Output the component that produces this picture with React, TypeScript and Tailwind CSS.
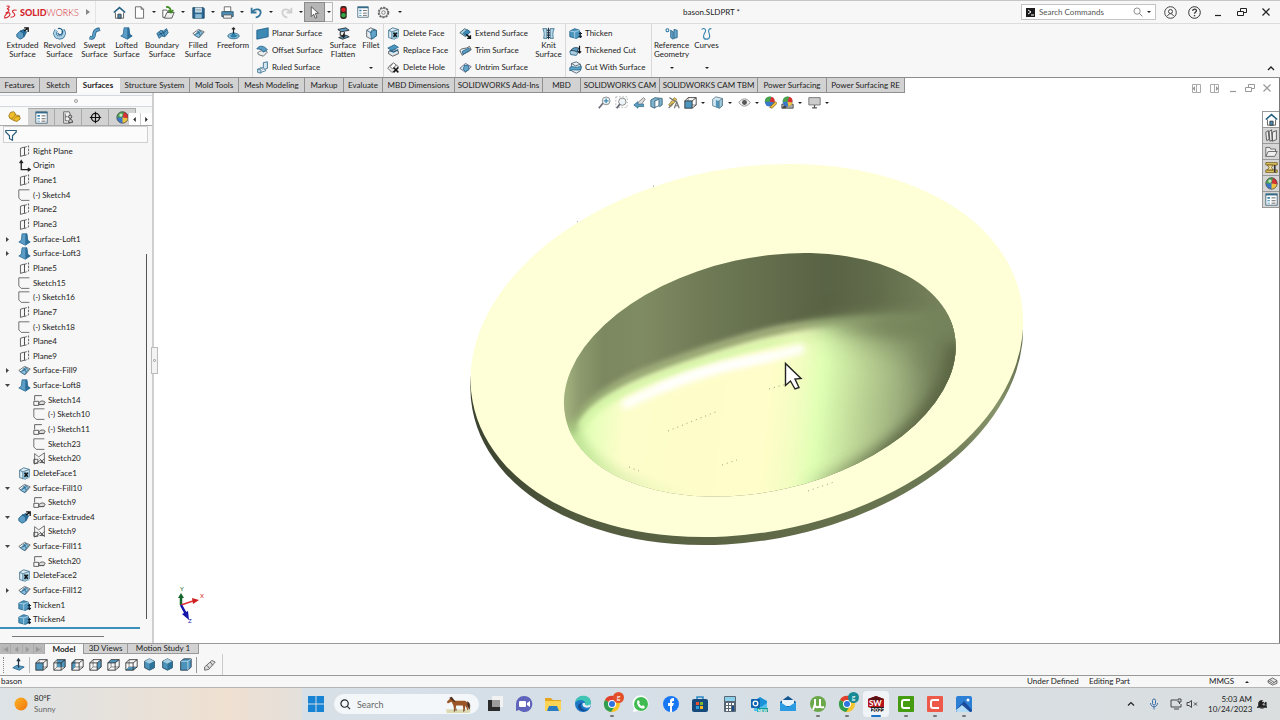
import { ReactNode } from "react";
import clsx from "clsx";

const B = "#5b9dc4";
const D = "#1f5f88";
const L = "#b9d9ea";
const K = "#333";

// every drawing sits on a 16x16 grid
const icons: Record<string, ReactNode> = {
  extrude: (
    <>
      <path d="M1 9l4-4 5 2-1 6-4 2-4-3z" fill={B} stroke={D} />
      <path d="M5 5l5-2 3 3-3 6-1-5z" fill="#2d6f99" stroke={D} />
      <path d="M10 5l4-3M10 1h5v5" stroke="#111" strokeWidth="1.6" fill="none" />
    </>
  ),
  revolve: (
    <>
      <path d="M4 4C1 8 3 13 8 13s7-6 4-9" fill="none" stroke={D} strokeWidth="4.500" />
      <path d="M4 4C1 8 3 13 8 13s7-6 4-9" fill="none" stroke="#a9d0e4" strokeWidth="3" />
      <path d="M6 2c5-1 7 3 5 6s-5 1-5-1" fill="none" stroke={D} strokeWidth="1.500" />
    </>
  ),
  swept: (
    <>
      <path d="M2 13c6 2 5-3 6-6s2-4 6-4" fill="none" stroke={D} strokeWidth="4.5" />
      <path d="M2 13c6 2 5-3 6-6s2-4 6-4" fill="none" stroke={B} strokeWidth="2.8" />
      <path d="M13 1l2 4" stroke={D} />
    </>
  ),
  loft: (
    <>
      <path d="M5 1h6l1 8 3 2-6 4-8-4 3-2z" fill={B} stroke="#2d6f99" />
      <path d="M9 1h2l1 8 3 2-6 4z" fill="#2d6f99" />
    </>
  ),
  boundary: (
    <>
      <path d="M1 8l5-4 3 1 4-3 2 5-4 5-4-1-3 3z" fill={B} stroke={D} />
      <path d="M4 6l4 5M8 5l3 6M3 10c4-3 7-2 10-6" stroke="#174d70" fill="none" />
    </>
  ),
  fill: (
    <>
      <path d="M1 8l7-5 7 3-6 7z" fill="#fff" stroke="#555" />
      <path d="M3 10l6-6 4 3-5 6z" fill="#8fc1dc" stroke={D} />
      <path d="M5 9l5-3M7 5l3 5" stroke={D} />
    </>
  ),
  freeform: (
    <>
      <ellipse cx="8" cy="11" rx="7" ry="3.5" fill="#8fc1dc" stroke={D} />
      <path d="M4 10c3 0 2-4 4-4s1 4 4 4-2 3-4 3-4-1-4-3z" fill="#2d7ea8" />
      <path d="M8 8V1M6 3l2-2 2 2" stroke="#222" fill="none" strokeWidth="1.4" />
    </>
  ),
  planar: <path d="M1 4l14-3v11L1 15z" fill="#3d8ab5" stroke={D} />,
  offset: (
    <>
      <path d="M2 11c2-3 9-4 12-1l-5 5-6-2z" fill="#e9eef0" stroke="#555" />
      <path d="M1 6c3-5 9-4 13 1l-5 3C8 7 5 6 1 6z" fill={B} stroke={D} />
    </>
  ),
  ruled: (
    <>
      <path d="M9 2l5-1v8l-5 2z" fill="#d7e7ef" stroke={D} />
      <path d="M2 10l4 4 6-2-3-4z" fill="#f0f4f6" stroke="#3b7090" />
      <path d="M2 10v4l4 1v-4zM5 7l4 4" fill="#c3dcea" stroke="#3b7090" />
    </>
  ),
  flatten: (
    <>
      <path d="M1 3l10-2 4 3-10 2z" fill={B} stroke="#222" />
      <path d="M2 13l9-3 4 2-8 3z" fill={B} stroke="#222" />
      <path d="M4 6v4l5 1V6M8 8v5M6 11l2 2 2-2" fill="none" stroke="#222" strokeWidth="1.3" />
    </>
  ),
  fillet: (
    <>
      <path d="M2 4l5-3 7 3v7l-6 4-6-3z" fill="#e4edf2" stroke="#555" />
      <path d="M7 8c0-3 3-4 7-4v7l-6 4z" fill="#62a5ca" stroke={D} />
      <path d="M2 4l5 3c0-3 3-4 5-4" fill="none" stroke={D} />
    </>
  ),
  deleteFace: (
    <>
      <path d="M2 4l5-3 7 2v9l-5 3-7-2z" fill="#dcebf2" stroke="#356b8a" />
      <path d="M2 4l4 2 8-3M6 6v9" fill="none" stroke="#356b8a" />
      <path d="M6 6h8v8H6z" fill="#8fbdd4" />
      <path d="M8 7l4 5M12 7l-4 5" stroke="#111" strokeWidth="1.8" />
    </>
  ),
  replaceFace: (
    <>
      <path d="M2 9l8-2 4 2v3l-7 3-5-3z" fill="#dbe8ee" stroke="#444" />
      <path d="M1 5l8-4 5 3-8 4z" fill="#4b98c2" stroke={D} />
      <path d="M3 8l5 2 6-3" stroke={D} fill="none" strokeWidth="1.6" />
    </>
  ),
  deleteHole: (
    <>
      <path d="M1 9c2-3 4-6 8-6l5 4-3 4-5 3z" fill="#e6e6e6" stroke="#555" />
      <path d="M4 7l4-5 3 3-4 5z" fill="#fff" stroke="#666" />
      <path d="M8 8l6 6M14 8l-6 6" stroke="#111" strokeWidth="1.8" />
    </>
  ),
  extend: (
    <>
      <path d="M1 7l6-5 6 4-5 6z" fill="#a8cde0" stroke="#355" />
      <path d="M5 8l5-5 4 3-5 5z" fill="#3d8ab5" stroke={D} />
      <path d="M9 9l5 5M14 10v4h-4" stroke="#111" strokeWidth="1.8" fill="none" />
    </>
  ),
  trim: (
    <>
      <path d="M1 8c3-4 7-1 12-5l2 4c-4 4-7 3-11 7z" fill="#eef3f5" stroke="#444" />
      <path d="M4 9l8-4 2 2-9 6z" fill="#5b9dc4" stroke={D} />
    </>
  ),
  untrim: (
    <>
      <path d="M1 9l7-6 7 4-7 7z" fill="#e3eef3" stroke="#557" />
      <path d="M7 5l5 1v5l-4 2-3-3z" fill="#63a4c7" stroke={D} />
    </>
  ),
  knit: (
    <>
      <path d="M1 2h5v12H2c1-4 1-8-1-12zM15 2h-5v12h4c-1-4-1-8 1-12z" fill={L} stroke="#356b8a" />
      <path d="M8 1v14" stroke="#234" strokeWidth="1.300" />
      <path d="M6 4h4M6 7h4M6 10h4M6 13h4" stroke="#234" strokeWidth="1.300" />
    </>
  ),
  thicken: (
    <>
      <path d="M1 5l6-3 6 2v8l-4 2-8-2z" fill="#4f97be" stroke={D} />
      <path d="M1 5l6 1 6-2M7 6v8" stroke={L} fill="none" />
      <path d="M12 8h4M14 6v7M12 11l2 2 2-2" stroke="#123" strokeWidth="1.3" fill="none" />
    </>
  ),
  thickCut: (
    <>
      <path d="M1 9l6-3 5 3-3 5-7-1z" fill="#a9cedf" stroke={D} />
      <path d="M2 8c3-4 6-4 10-3l-2 5c-3-2-6-2-8-2z" fill="#5b9dc4" stroke="#234" />
      <path d="M13 2v9M11 9l2 2 2-2" stroke="#111" strokeWidth="1.4" fill="none" />
    </>
  ),
  cutWith: (
    <>
      <path d="M3 3l6-2 5 3v8l-5 3-6-3z" fill="#e8f0f3" stroke="#456" />
      <path d="M1 8c3-3 8 2 14-2v4c-5 3-9-1-14 2z" fill="#5ba5c9" stroke={D} />
      <path d="M3 3l5 3 6-2" stroke="#456" fill="none" />
    </>
  ),
  refGeo: (
    <>
      <circle cx="3" cy="4" r="1.8" fill="none" stroke="#2c77a3" strokeWidth="1.3" />
      <path d="M7 4l3 2v9l-3-2zM11 3l4 1v9l-4 1z" fill="#6aa9cb" stroke={D} />
    </>
  ),
  curves: <path d="M2 3c4-3 6 1 4 4s-3 8 2 8 4-5 3-8 0-5 3-5" fill="none" stroke="#3a87b2" strokeWidth="1.4" />,
  plane: (
    <>
      <path d="M3 4l5-1.500v10L3 14z" fill="none" stroke="#444" />
      <path d="M8 3l5-2v10l-5 2z" fill="none" stroke="#444" strokeDasharray="3 1.500" />
    </>
  ),
  origin: <path d="M4 3v10h10M2 5l2-3 2 3M12 11l3 2-3 2" fill="none" stroke="#222" strokeWidth="1.6" />,
  sketch: <path d="M14 1H1v10l3 3h10" fill="none" stroke="#555" />,
  sketchShared: (
    <>
      <path d="M11 2H2v6M1 9v5h6V9zM7 13h7" fill="none" stroke="#444" />
      <path d="M7 11c2-3 6-3 8-1l-2 3H8z" fill="#ddd" stroke="#444" />
    </>
  ),
  sketch3d: (
    <>
      <path d="M2 2l5 4 7-5v13l-5-4-7 5z" fill="none" stroke="#555" />
      <path d="M1 9h5v5H1zM8 8l6 6M14 8l-5 5M8 13h6" fill="none" stroke="#444" />
    </>
  ),
  home: (
    <>
      <path d="M3 8v7h10V8" fill="#fff" stroke="#444" />
      <path d="M1 8l7-6 7 6" fill="none" stroke="#245f80" strokeWidth="2" />
      <path d="M6 10h4v5H6z" fill="#4b8db5" stroke={K} />
    </>
  ),
  newDoc: <path d="M3 1h7l3 3v11H3zM10 1v3h3" fill="#fff" stroke="#555" />,
  open: (
    <>
      <path d="M1 5h5l1 2h5v7H1z" fill="#fff" stroke="#444" />
      <path d="M3 15l3-7h9l-3 7z" fill="#eee" stroke="#444" />
      <path d="M5 1c4 0 6 2 6 6M8 5l3 3 3-3" fill="none" stroke="#3f8b22" strokeWidth="2" />
    </>
  ),
  save: (
    <>
      <path d="M1 2h13l1 1v12H1z" fill="#2a6790" stroke="#15415f" />
      <path d="M4 2h8v6H4z" fill="#e8f1f5" />
      <path d="M4 10h8v5H4z" fill="#8bbad2" />
      <path d="M5 4h6M5 6h6" stroke="#7799aa" />
    </>
  ),
  print: (
    <>
      <path d="M4 1h8v6H4z" fill="#fff" stroke="#555" />
      <path d="M1 7h14v6H1z" fill="#4e8fb5" stroke="#234d68" />
      <path d="M3 11h10v4H3z" fill="#eee" stroke="#555" />
    </>
  ),
  undo: <path d="M2 2v6h6M3 7c4-5 11-3 10 2-1 3-3 5-6 5" fill="none" stroke="#35769c" strokeWidth="2.2" />,
  redo: <path d="M14 2v6H8M13 7C9 2 2 4 3 9c1 3 3 5 6 5" fill="none" stroke="#cfcfcf" strokeWidth="2.2" />,
  cursor: <path d="M4 1v12l3-3 2 5 2-1-2-5h4z" fill="#fff" stroke="#444" />,
  traffic: (
    <>
      <rect x="4" y="0" width="8" height="16" rx="3" fill="#30261f" />
      <circle cx="8" cy="4.500" r="2.800" fill="#e21f26" />
      <circle cx="8" cy="11.500" r="2.800" fill="#32a546" />
    </>
  ),
  list: (
    <>
      <path d="M1 1h14v14H1z" fill="#fff" stroke="#335a70" />
      <path d="M1 1h14v2H1z" fill="#356b8a" />
      <path d="M3 5h3v2H3zM3 9h3v1H3zM3 12h3v1H3z" fill="#3180ac" />
      <path d="M8 6h5M8 9.500h5M8 12.500h5" stroke="#444" />
    </>
  ),
  gear: (
    <>
      <circle cx="8" cy="8" r="6.200" fill="none" stroke="#666" strokeWidth="1.800" strokeDasharray="2.800 1.200" />
      <circle cx="8" cy="8" r="5" fill="none" stroke="#666" />
      <circle cx="8" cy="8" r="2.200" fill="none" stroke="#666" />
    </>
  ),
  part: (
    <>
      <path d="M1 7l2-4 4-1 2 2v2l5 1 1 4-4 3-4-1-5-3z" fill="#f1bf2c" stroke="#98700d" />
      <path d="M3 10c3 1 4-1 6-5M7 12c1-3 3-4 7-4" fill="none" stroke="#a87f15" />
    </>
  ),
  config: (
    <>
      <path d="M2 1h7l1 3v11H2z" fill="#eee" stroke="#555" />
      <path d="M4 3v9h3M4 7h3" fill="none" stroke="#555" />
      <circle cx="10" cy="7" r="2" fill="#ccc" stroke="#333" />
      <path d="M8 14c0-5 5-5 5 0z" fill="#ccc" stroke="#333" />
    </>
  ),
  target: (
    <>
      <circle cx="8" cy="8" r="5" fill="none" stroke="#111" strokeWidth="1.600" />
      <path d="M8 1v14M1 8h14" stroke="#111" strokeWidth="1.400" />
    </>
  ),
  ball: (
    <>
      <circle cx="8" cy="8" r="7" fill="#3a77c9" />
      <path d="M8 8L1 8A7 7 0 0 1 10 1z" fill="#49a348" />
      <path d="M8 8l2-7a7 7 0 0 1 5 8z" fill="#d93030" />
      <path d="M8 8l7 1a7 7 0 0 1-7 6z" fill="#f0c13c" />
      <circle cx="8" cy="8" r="7" fill="none" stroke="#555" />
      <circle cx="6" cy="5" r="2" fill="#fff" opacity=".7" />
    </>
  ),
  ballEdit: (
    <>
      <circle cx="7" cy="7" r="6" fill="#3a77c9" />
      <path d="M7 7L1 7A6 6 0 0 1 9 1z" fill="#49a348" />
      <path d="M7 7l2-6a6 6 0 0 1 4 7z" fill="#d93030" />
      <path d="M7 14l7-7 2 2-6 6z" fill="#f0c13c" stroke="#8a6b1d" />
    </>
  ),
  ballScene: (
    <>
      <path d="M1 10h14v5H1z" fill="#aaa" stroke="#444" />
      <path d="M1 15l4-5h3l-2 5M11 10l4 5" fill="#444" />
      <circle cx="8" cy="7" r="6" fill="#3a77c9" />
      <path d="M8 7L2 7A6 6 0 0 1 10 1z" fill="#49a348" />
      <path d="M8 7l2-6a6 6 0 0 1 4 7z" fill="#d93030" />
      <path d="M8 7l6 1a6 6 0 0 1-5 5z" fill="#f0c13c" />
    </>
  ),
  funnel: <path d="M1 2h14v2l-5 5v6l-4-2V9L1 4z" fill="#fff" stroke="#2c5f7c" strokeWidth="1.600" />,
  zoomFit: (
    <>
      <circle cx="10" cy="6" r="4.800" fill="#eef5f8" stroke="#777" />
      <path d="M6 9l-5 6" stroke="#667" strokeWidth="2" />
      <path d="M10 3v6M7 6h6" stroke="#3a87b2" strokeWidth="1.500" />
    </>
  ),
  zoomArea: (
    <>
      <path d="M1 1h14v13H1z" fill="none" stroke="#aaa" strokeDasharray="2 2" />
      <circle cx="9" cy="7" r="4.500" fill="#eef5f8" stroke="#777" />
      <path d="M6 10l-4 5" stroke="#667" strokeWidth="2" />
    </>
  ),
  prev: (
    <>
      <path d="M5 9l8-7 2 2-6 8z" fill="#ddd" stroke="#777" />
      <path d="M1 11l5-4v3h7v3H6v2z" fill="#5ba0c5" stroke="#396f8d" />
    </>
  ),
  section: (
    <>
      <path d="M1 5l5-3 9 1v8l-3 2-4-3-2 5-5-2z" fill="#7fb2cc" stroke="#315c74" />
      <path d="M6 6l5-2v8l-5 2z" fill="#fff" stroke="#315c74" />
    </>
  ),
  annot: (
    <>
      <path d="M2 11l7-9 3 2-7 9z" fill="#e6c054" stroke="#8f7a3a" />
      <path d="M3 2l8 5M2 15l5-6M9 15l3-8 3 8M10 12h4" stroke="#777" fill="none" strokeWidth="1.500" />
    </>
  ),
  style: (
    <>
      <path d="M2 4l4-3 8 2v9l-4 3-8-3z" fill="#d3e6ef" stroke="#55778a" />
      <path d="M6 5l4 1v9l-4-1.500z" fill="#4f97be" />
      <path d="M10 6l4-3v9l-4 3z" fill="#9fc7db" stroke="#55778a" />
    </>
  ),
  pencil: (
    <>
      <path d="M2 11l9-8 4 2-8 9-5 1z" fill="#ddd" stroke="#555" />
      <path d="M5 9l3 4M9 5l3 4" stroke="#555" />
    </>
  ),
  eye: (
    <>
      <path d="M1 8c4-6 10-6 14 0-4 6-10 6-14 0z" fill="#eee" stroke="#888" />
      <circle cx="8" cy="8" r="3" fill="#555" />
    </>
  ),
  monitor: (
    <>
      <path d="M1 2h14v9H1z" fill="#ccc" stroke="#666" />
      <path d="M8 11v3M5 14.500h6" stroke="#555" strokeWidth="1.500" />
    </>
  ),
  books: <path d="M1 4l3-2 1 11-3 1zM5 3l3-2 1 13-3 1zM9 4l5-2v11l-5 2z" fill="#eee" stroke="#444" />,
  folder: <path d="M1 14V3h5l1 2h6v3M1 14l3-6h11l-3 6z" fill="#eee" stroke="#555" />,
  palette: (
    <>
      <path d="M1 2h14v3H1zM1 11h14v3H1z" fill="#e7c765" stroke="#6e5a19" />
      <path d="M3 5h7l-2 3 2 3H3l2-3z" fill="#f3dfa0" stroke="#6e5a19" />
      <path d="M12 5v9" stroke="#333" strokeWidth="2" />
    </>
  ),
  normal: (
    <>
      <path d="M1 12l5-3 9 2-6 4z" fill="#5b9dc4" stroke={D} />
      <path d="M8 12V1M6 4l2-3 2 3" stroke="#234" fill="none" strokeWidth="1.500" />
    </>
  ),
  front: <Box faces="M1 6h9v9H1z" />,
  back: <Box faces="M5 2h10v9H5z" />,
  left: <Box faces="M1 6l4-4v9l-4 4z" />,
  right: <Box faces="M10 6l5-4v9l-5 4z" />,
  top: <Box faces="M1 6l4-4h10l-5 4z" />,
  bottom: <Box faces="M1 15l4-4h10l-5 4z" />,
  iso: <Cube />,
  trimetric: <Cube />,
  dimetric: (
    <>
      <path d="M2 4l4-3h9v10l-4 4H2z" fill="#4b93bb" stroke="#234" />
      <path d="M2 4h9l4-3M11 4v11" fill="none" stroke="#c9e1ee" />
    </>
  ),
};

function Box({ faces }: { faces: string }) {
  return (
    <>
      <path d="M5 2v9h10M5 11l-4 4" fill="none" stroke="#777" />
      <path d={faces} fill="#4f97be" />
      <path d="M1 6h9v9H1zM1 6l4-4h10l-5 4M15 2v9l-5 4" fill="none" stroke="#2a2a2a" />
    </>
  );
}

function Cube() {
  return (
    <>
      <path d="M2 4l6-3 6 3v8l-6 3-6-3z" fill="#4b93bb" stroke="#1d3e52" />
      <path d="M2 4l6-3 6 3-6 3z" fill="#a6cde1" />
      <path d="M8 7l6-3v8l-6 3z" fill="#2e7199" />
    </>
  );
}

function Icon({ name, className = "size-[13px]" }: { name: string; className?: string }) {
  return (
    <svg viewBox="0 0 16 16" className={clsx("shrink-0", className)} aria-hidden="true">
      {icons[name]}
    </svg>
  );
}

function Caret({ className }: { className?: string }) {
  return (
    <svg viewBox="0 0 4 2" className={clsx("h-[2px] w-1 shrink-0", className)} aria-hidden="true">
      <path d="M0 0h4L2 2z" fill="#222" />
    </svg>
  );
}

const quickTools: { name: string; width: string; caret?: boolean }[] = [
  { name: "newDoc", width: "w-[29px]", caret: true },
  { name: "open", width: "w-[30px]", caret: true },
  { name: "save", width: "w-[29px]", caret: true },
  { name: "print", width: "w-[29px]", caret: true },
  { name: "undo", width: "w-[30px]", caret: true },
  { name: "redo", width: "w-6", caret: true },
];

function TitleBar() {
  return (
    <header className="flex h-6 shrink-0 items-center border-t border-b border-t-[#c9c4c4] border-b-[#dcdcdc] bg-[#f7f7f7]">
      <div className="flex h-full w-[96px] items-center border-r border-[#e4e4e4] pl-[3px] text-[#d5262d]">
        <svg viewBox="0 0 34 32" className="mr-[2px] h-[14px] w-[15px]" aria-hidden="true">
          <path d="M8 3c8-3 8 3 1 6 7 0 5 7-3 9M3 27c9-16 17-8 10-1-3 3-7 4-11 3M31 12c-9-2-12 2-7 6s3 10-7 10" fill="none" stroke="#d5262d" strokeWidth="2.600" />
        </svg>
        <span className="text-[9px]">
          <b className="font-black">SOLID</b>
          <span className="font-light">WORKS</span>
        </span>
        <svg viewBox="0 0 4 6" className="ml-auto mr-[5px] h-[6px] w-1" aria-hidden="true">
          <path d="M0 0l4 3-4 3z" fill="#888" />
        </svg>
      </div>
      <nav className="flex h-full items-center pl-[17px]" aria-label="Quick access">
        <button className="mr-[7px]" aria-label="Home">
          <Icon name="home" />
        </button>
        {quickTools.map((t) => (
          <button key={t.name} className={clsx("flex items-center gap-[6px]", t.width)} aria-label={t.name}>
            <Icon name={t.name} />
            {t.caret && <Caret />}
          </button>
        ))}
        <button className="flex h-5 w-[21px] items-center justify-center border border-[#8a8a8a] bg-[#b5b5b5]" aria-label="Select">
          <Icon name="cursor" />
        </button>
        <button className="mr-1 flex h-5 w-2 items-center justify-center border border-l-0 border-[#bbb]" aria-label="Select options">
          <Caret />
        </button>
        <button className="w-5" aria-label="Rebuild">
          <Icon name="traffic" />
        </button>
        <button className="w-5" aria-label="File properties">
          <Icon name="list" className="size-3" />
        </button>
        <button className="flex items-center gap-2" aria-label="Options">
          <Icon name="gear" />
          <Caret />
        </button>
      </nav>
      <h1 className="flex-1 text-center">bason.SLDPRT *</h1>
      <label className="flex h-4 w-[135px] items-center border border-[#c4c4c4] bg-white px-1">
        <span className="flex size-[9px] items-center justify-center bg-[#1b1b1b] text-white">
          <svg viewBox="0 0 9 9" aria-hidden="true">
            <path d="M2 2l3 2-3 2M5 7h3" fill="none" stroke="#fff" />
          </svg>
        </span>
        <input className="ml-1 w-0 flex-1 outline-none placeholder:text-[#555]" placeholder="Search Commands" aria-label="Search Commands" />
        <svg viewBox="0 0 16 16" className="mr-1 size-[10px]" aria-hidden="true">
          <circle cx="6.500" cy="6.500" r="5" fill="none" stroke="#777" strokeWidth="1.300" />
          <path d="M10 10l5 5" stroke="#777" strokeWidth="1.500" />
        </svg>
        <Caret />
      </label>
      <div className="flex items-center pl-2 pr-2">
        <button className="w-6" aria-label="Login">
          <svg viewBox="0 0 13 13" className="size-[13px]" fill="none" stroke="#444">
            <circle cx="6.500" cy="6.500" r="5.800" />
            <circle cx="6.500" cy="5.500" r="2" />
            <path d="M3.500 10c1-3 5-3 6 0" />
          </svg>
        </button>
        <button className="w-6" aria-label="Help">
          <svg viewBox="0 0 13 13" className="size-[13px]" fill="none" stroke="#333">
            <circle cx="6.500" cy="6.500" r="5.800" />
            <path d="M4.700 5c0-2.500 3.700-2.500 3.700-.3 0 1.500-1.900 1.400-1.900 3M6.500 9v1.300" strokeWidth="1.300" />
          </svg>
        </button>
        <WindowButtons color="#222" gap="w-6" />
      </div>
    </header>
  );
}

function WindowButtons({ color, gap }: { color: string; gap: string }) {
  return (
    <>
      <button className={gap} aria-label="Minimize">
        <svg viewBox="0 0 12 12" className="size-3" stroke={color}>
          <path d="M3 9.500h6" strokeWidth="1.200" />
        </svg>
      </button>
      <button className={gap} aria-label="Restore">
        <svg viewBox="0 0 12 12" className="size-3" fill="none" stroke={color}>
          <path d="M1.500 5.500h6v4h-6zM4.500 5V2.500h6v4H8" />
        </svg>
      </button>
      <button aria-label="Close">
        <svg viewBox="0 0 12 12" className="size-3" stroke={color}>
          <path d="M2.500 2.500l7 7M9.500 2.500l-7 7" strokeWidth="1.200" />
        </svg>
      </button>
    </>
  );
}

function BigTool({ icon, lines, width, caret }: { icon: string; lines: string[]; width: string; caret?: boolean }) {
  return (
    <button className={clsx("flex h-full flex-col items-center pt-[3px] text-center leading-[9px]", width)}>
      <Icon name={icon} className="mb-[1px] size-[13px]" />
      {lines.map((l) => (
        <span key={l} className="whitespace-nowrap">{l}</span>
      ))}
      {caret && <Caret className="mt-auto mb-2" />}
    </button>
  );
}

function SmallTools({ items, width }: { items: [string, string][]; width: string }) {
  return (
    <div className={clsx("flex h-full flex-col pt-[1px] pb-[1px] pl-[3px]", width)}>
      {items.map(([icon, label]) => (
        <button key={label} className="flex flex-1 items-center gap-[3px] whitespace-nowrap">
          <Icon name={icon} />
          {label}
        </button>
      ))}
    </div>
  );
}

function Divider() {
  return <div className="h-full w-px shrink-0 bg-[#d9d9d9]" />;
}

function Ribbon() {
  return (
    <div className="flex h-[54px] shrink-0 border-b border-[#8c8c8c] bg-[#f7f7f7]">
      <div className="flex h-full pl-1">
        <BigTool icon="extrude" lines={["Extruded", "Surface"]} width="w-[37px]" />
        <BigTool icon="revolve" lines={["Revolved", "Surface"]} width="w-[37px]" />
        <BigTool icon="swept" lines={["Swept", "Surface"]} width="w-[33px]" />
        <BigTool icon="loft" lines={["Lofted", "Surface"]} width="w-[31px]" />
        <BigTool icon="boundary" lines={["Boundary", "Surface"]} width="w-10" />
        <BigTool icon="fill" lines={["Filled", "Surface"]} width="w-8" />
        <BigTool icon="freeform" lines={["Freeform"]} width="w-[38px]" />
      </div>
      <Divider />
      <SmallTools
        width="w-[74px]"
        items={[["planar", "Planar Surface"], ["offset", "Offset Surface"], ["ruled", "Ruled Surface"]]}
      />
      <BigTool icon="flatten" lines={["Surface", "Flatten"]} width="w-8" />
      <BigTool icon="fillet" lines={["Fillet"]} width="w-6" caret />
      <Divider />
      <SmallTools
        width="w-[71px]"
        items={[["deleteFace", "Delete Face"], ["replaceFace", "Replace Face"], ["deleteHole", "Delete Hole"]]}
      />
      <Divider />
      <SmallTools
        width="w-[76px]"
        items={[["extend", "Extend Surface"], ["trim", "Trim Surface"], ["untrim", "Untrim Surface"]]}
      />
      <BigTool icon="knit" lines={["Knit", "Surface"]} width="w-[33px]" />
      <Divider />
      <SmallTools
        width="w-[85px]"
        items={[["thicken", "Thicken"], ["thickCut", "Thickened Cut"], ["cutWith", "Cut With Surface"]]}
      />
      <Divider />
      <BigTool icon="refGeo" lines={["Reference", "Geometry"]} width="w-[39px]" caret />
      <BigTool icon="curves" lines={["Curves"]} width="w-[31px]" caret />
      <button className="ml-auto mr-[5px] self-end pb-[6px]" aria-label="Collapse ribbon">
        <svg viewBox="0 0 8 5" className="h-[5px] w-2">
          <path d="M1 4l3-3 3 3" fill="none" stroke="#222" strokeWidth="1.300" />
        </svg>
      </button>
    </div>
  );
}

const ribbonTabs: [string, string][] = [
  ["Features", "w-10"],
  ["Sketch", "w-[37px]"],
  ["Surfaces", "w-[43px]"],
  ["Structure System", "w-[70px]"],
  ["Mold Tools", "w-[49px]"],
  ["Mesh Modeling", "w-[66px]"],
  ["Markup", "w-[39px]"],
  ["Evaluate", "w-[39px]"],
  ["MBD Dimensions", "w-[72px]"],
  ["SOLIDWORKS Add-Ins", "w-[88px]"],
  ["MBD", "w-[38px]"],
  ["SOLIDWORKS CAM", "w-[79px]"],
  ["SOLIDWORKS CAM TBM", "w-[98px]"],
  ["Power Surfacing", "w-[69px]"],
  ["Power Surfacing RE", "w-[78px]"],
];

function RibbonTabs() {
  return (
    <div role="tablist" className="flex h-[15px]">
      {ribbonTabs.map(([label, width]) => (
        <button
          key={label}
          role="tab"
          aria-selected={label === "Surfaces"}
          className={clsx(
            "flex h-full shrink-0 items-center justify-center border-r border-b whitespace-nowrap",
            width,
            label === "Surfaces" ? "border-transparent bg-[#fafafa] font-bold" : "border-[#909090] bg-[#d2d2d2]"
          )}
        >
          {label}
        </button>
      ))}
    </div>
  );
}

type Row = { icon: string; label: string; child?: boolean; arrow?: "open" | "closed" };

const tree: Row[] = [
  { icon: "plane", label: "Right Plane" },
  { icon: "origin", label: "Origin" },
  { icon: "plane", label: "Plane1" },
  { icon: "sketch", label: "(-) Sketch4" },
  { icon: "plane", label: "Plane2" },
  { icon: "plane", label: "Plane3" },
  { icon: "loft", label: "Surface-Loft1", arrow: "closed" },
  { icon: "loft", label: "Surface-Loft3", arrow: "closed" },
  { icon: "plane", label: "Plane5" },
  { icon: "sketch", label: "Sketch15" },
  { icon: "sketch", label: "(-) Sketch16" },
  { icon: "plane", label: "Plane7" },
  { icon: "sketch", label: "(-) Sketch18" },
  { icon: "plane", label: "Plane4" },
  { icon: "plane", label: "Plane9" },
  { icon: "fill", label: "Surface-Fill9", arrow: "closed" },
  { icon: "loft", label: "Surface-Loft8", arrow: "open" },
  { icon: "sketchShared", label: "Sketch14", child: true },
  { icon: "sketch", label: "(-) Sketch10", child: true },
  { icon: "sketchShared", label: "(-) Sketch11", child: true },
  { icon: "sketch", label: "Sketch23", child: true },
  { icon: "sketch3d", label: "Sketch20", child: true },
  { icon: "deleteFace", label: "DeleteFace1" },
  { icon: "fill", label: "Surface-Fill10", arrow: "open" },
  { icon: "sketchShared", label: "Sketch9", child: true },
  { icon: "extrude", label: "Surface-Extrude4", arrow: "open" },
  { icon: "sketch3d", label: "Sketch9", child: true },
  { icon: "fill", label: "Surface-Fill11", arrow: "open" },
  { icon: "sketchShared", label: "Sketch20", child: true },
  { icon: "deleteFace", label: "DeleteFace2" },
  { icon: "fill", label: "Surface-Fill12", arrow: "closed" },
  { icon: "thicken", label: "Thicken1" },
  { icon: "thicken", label: "Thicken4" },
];

function FeatureTree() {
  return (
    <aside className="relative z-10 flex w-[154px] shrink-0 flex-col border-r-2 border-[#cfcfcf] bg-[#f7f7f7]">
      <div className="mt-[2px] flex h-3 shrink-0 items-center justify-center border-y border-[#d5d9e2] bg-[#fbfbfb]">
        <span className="size-1 rounded-full border border-[#999]" />
      </div>
      <div className="mt-[1px] flex h-[18px] shrink-0 border-b border-[#aaa]">
        <button className="flex w-7 items-center justify-center bg-[#fafafa]" aria-label="Feature tree">
          <Icon name="part" />
        </button>
        {["list", "config", "target", "ball"].map((n) => (
          <button key={n} className="flex w-[27px] items-center justify-center border-r border-t border-[#aaa] bg-[#d2d2d2]" aria-label={n}>
            <Icon name={n} />
          </button>
        ))}
        <div className="-ml-2 flex flex-1 items-end">
          {["M3 0v6L0 3z", "M0 0v6l3-3z"].map((d) => (
            <button key={d} className="flex h-3 w-1/2 items-center justify-center border-l border-[#ccc] bg-white" aria-label="Scroll tabs">
              <svg viewBox="0 0 3 6" className="h-[5px] w-[3px]">
                <path d={d} fill="#222" />
              </svg>
            </button>
          ))}
        </div>
      </div>
      <label className="mr-1 ml-[3px] flex h-[17px] shrink-0 items-center border border-[#d0d0d0] bg-[#fbfbfb] pl-[1px]">
        <Icon name="funnel" className="size-3" />
        <input className="w-full outline-none" aria-label="Filter tree" />
      </label>
      <ul className="flex min-h-0 flex-1 flex-col pt-[1px]">
        {tree.map((r, i) => (
          <li key={i} className={clsx("flex min-h-0 flex-1 items-center whitespace-nowrap", r.child ? "pl-[33px]" : "pl-[5px]")}>
            {!r.child && (
              <span className="mr-2 flex w-[5px] justify-center">
                {r.arrow && (
                  <svg viewBox="0 0 5 5" className="size-[5px]">
                    <path d={r.arrow === "open" ? "M0 1h5L2.500 4z" : "M1 0l3 2.500L1 5z"} fill="#444" />
                  </svg>
                )}
              </span>
            )}
            <Icon name={r.icon} className="mr-[2px] size-[13px]" />
            {r.label}
          </li>
        ))}
      </ul>
      <div className="mr-3 h-[2px] shrink-0 bg-[#3d8fbb]" />
      <div className="flex h-[14px] shrink-0 items-center pl-3">
        <div className="h-px w-[92px] bg-[#777]" />
      </div>
      <div className="absolute top-[161px] right-[5px] bottom-[24px] w-px bg-[#555]" />
      <div className="absolute top-[254px] -right-[6px] flex h-[27px] w-[7px] items-center justify-center border border-[#bbb] bg-[#f3f3f3]">
        <span className="size-[3px] rounded-full border border-[#999]" />
      </div>
    </aside>
  );
}

function Model() {
  return (
    <svg viewBox="154 93 1125 550" className="h-full w-full" role="img" aria-label="Basin model">
      <defs>
        <linearGradient id="rim" x1="-279" x2="279" gradientUnits="userSpaceOnUse">
          <stop offset="0" stopColor="#3c4330" />
          <stop offset=".15" stopColor="#525b3e" />
          <stop offset=".5" stopColor="#606a48" />
          <stop offset=".8" stopColor="#6d7954" />
          <stop offset=".93" stopColor="#87936a" />
          <stop offset="1" stopColor="#5c6649" />
        </linearGradient>
        <linearGradient id="wall" x1="564" x2="955" gradientUnits="userSpaceOnUse">
          <stop offset="0" stopColor="#a6b480" />
          <stop offset=".04" stopColor="#8d9a6d" />
          <stop offset=".1" stopColor="#7c8860" />
          <stop offset=".2" stopColor="#7f8b62" />
          <stop offset=".4" stopColor="#6c7753" />
          <stop offset=".67" stopColor="#596345" />
          <stop offset=".8" stopColor="#616c4b" />
          <stop offset="1" stopColor="#7b8860" />
        </linearGradient>
        <linearGradient id="floor" x1="564" y1="400" x2="955" y2="440" gradientUnits="userSpaceOnUse">
          <stop offset="0" stopColor="#c8ea9e" />
          <stop offset=".07" stopColor="#e4ffb8" />
          <stop offset=".16" stopColor="#fdfdcb" />
          <stop offset=".52" stopColor="#fffdc9" />
          <stop offset=".59" stopColor="#f3fdc1" />
          <stop offset=".65" stopColor="#deffb3" />
          <stop offset=".74" stopColor="#c0d998" />
          <stop offset=".83" stopColor="#a3b682" />
          <stop offset=".93" stopColor="#7b8961" />
          <stop offset="1" stopColor="#616c4a" />
        </linearGradient>
        <linearGradient id="shoulder" x1="790" x2="890" gradientUnits="userSpaceOnUse">
          <stop offset="0" stopColor="#76845b" stopOpacity="0" />
          <stop offset="1" stopColor="#76845b" />
        </linearGradient>
        <linearGradient id="shadeRight" x1="800" x2="890" gradientUnits="userSpaceOnUse">
          <stop offset="0" stopColor="#58623f" stopOpacity="0" />
          <stop offset="1" stopColor="#58623f" />
        </linearGradient>
        <linearGradient id="shadeLeft" x1="570" x2="700" gradientUnits="userSpaceOnUse">
          <stop offset="0" stopColor="#b4dc8c" />
          <stop offset="1" stopColor="#e6f5b4" stopOpacity="0" />
        </linearGradient>
        <linearGradient id="edge" x1="565" x2="870" gradientUnits="userSpaceOnUse">
          <stop offset="0" stopColor="#8c9d69" />
          <stop offset=".7" stopColor="#8c9d69" />
          <stop offset="1" stopColor="#8c9d69" stopOpacity=".2" />
        </linearGradient>
        <linearGradient id="glow" x1="565" x2="840" gradientUnits="userSpaceOnUse">
          <stop offset="0" stopColor="#d4f6a6" />
          <stop offset=".75" stopColor="#d4f6a6" />
          <stop offset="1" stopColor="#d4f6a6" stopOpacity="0" />
        </linearGradient>
        <clipPath id="bowl">
          <ellipse rx="199" ry="116.700" transform="translate(759.800 374.800) rotate(-12.500)" />
        </clipPath>
        <filter id="b2" x="-20%" y="-40%" width="140%" height="180%"><feGaussianBlur stdDeviation="3" /></filter>
        <filter id="b5" x="-20%" y="-60%" width="140%" height="220%"><feGaussianBlur stdDeviation="6" /></filter>
        <filter id="b9" x="-40%" y="-60%" width="180%" height="220%"><feGaussianBlur stdDeviation="11" /></filter>
      </defs>
      <ellipse rx="279" ry="182.500" transform="translate(746.700 358.500) rotate(-10.500)" fill="url(#rim)" />
      <ellipse rx="279" ry="182.500" transform="translate(746.900 350.500) rotate(-10.500)" fill="#feffd7" />
      <g clipPath="url(#bowl)">
        <path d="M550 240h420v270H550z" fill="url(#wall)" />
        <path d="M566 450C570 420 582 403 627 379C660 363 735 338 775 329C830 318 886 313 970 318V520H566z" fill="url(#floor)" filter="url(#b2)" />
        <path d="M571 435C576 412 592 399 627 381C660 365 735 341 775 332C800 326 830 321 870 319" fill="none" stroke="url(#edge)" strokeWidth="8" filter="url(#b2)" />
        <path d="M580 428C590 410 606 400 632 388C665 372 735 351 775 342C790 339 805 337 840 335" fill="none" stroke="url(#glow)" strokeWidth="8" filter="url(#b2)" />
        <path d="M790 322C840 313 890 310 980 310V342C920 341 860 336 790 326z" fill="url(#shoulder)" opacity=".85" filter="url(#b5)" />
        <path d="M810 318C860 312 920 312 980 316V400C930 352 870 348 810 340z" fill="url(#shoulder)" opacity=".55" filter="url(#b9)" />
        <path d="M915 345C935 340 960 335 975 330V450H905C930 420 935 380 915 345z" fill="#6f7c57" opacity=".5" filter="url(#b9)" />
        <path d="M957 345C957 400 905 452 835 480L800 490" fill="none" stroke="url(#shadeRight)" strokeWidth="22" opacity=".8" filter="url(#b5)" />
        <path d="M569 425C580 455 605 478 660 492L700 498" fill="none" stroke="url(#shadeLeft)" strokeWidth="12" filter="url(#b5)" />
        <path d="M626 404C660 387 700 371 740 363C765 357 785 354 800 349" fill="none" stroke="#fff" strokeWidth="9" strokeLinecap="round" filter="url(#b2)" />
        <path d="M660 388C690 375 710 370 740 363L770 357" fill="none" stroke="#fff" strokeWidth="4" strokeLinecap="round" filter="url(#b2)" />
      </g>
      <g stroke="#555c42" strokeDasharray="1 4" opacity=".6">
        <path d="M668 431l50-20M769 389l18-5M808 491l26-9M629 467l10 4M722 465l15-5M577 222l3-2M653 186h2" fill="none" />
      </g>
      <path d="M785.500 363.500v22l5-4.500 4.500 8 4-1.500-4-8.500 6-.5z" fill="#fff" stroke="#222" strokeWidth="1.400" />
      <g fill="none" strokeWidth="1.600">
        <path d="M181 605v-9" stroke="#16662a" strokeWidth="2.500" />
        <path d="M178 598l3-5 3 5z" fill="#16662a" />
        <path d="M181 605l12-4" stroke="#e03131" />
        <path d="M192 598l7 2-6 4z" fill="#cf1f1f" />
        <path d="M181 605l5 9" stroke="#1414a8" strokeWidth="2.500" />
        <path d="M182 614l6-3 1 9z" fill="#1414a8" />
      </g>
      <g className="text-[6px]">
        <text x="180" y="591" fill="#16662a">Y</text>
        <text x="200" y="598" fill="#cf1f1f">X</text>
        <text x="188" y="623" fill="#1414a8">Z</text>
      </g>
    </svg>
  );
}

const viewTools: [string, string, boolean?][] = [
  ["zoomFit", "w-[17px]"],
  ["zoomArea", "w-[18px]"],
  ["prev", "w-[17px]"],
  ["section", "w-[17px]"],
  ["annot", "w-[17px]"],
  ["front", "w-[27px]", true],
  ["style", "w-[27px]", true],
  ["eye", "w-[26px]", true],
  ["ballEdit", "w-[17px]"],
  ["ballScene", "w-[27px]", true],
  ["monitor", "w-[27px]", true],
];

function Viewport() {
  return (
    <main className="relative min-w-0 flex-1 border-r border-[#777] bg-white">
      <Model />
      <div className="absolute top-[3px] left-[444px] flex">
        {viewTools.map(([name, width, caret]) => (
          <button key={name} className={clsx("flex items-center gap-1", width)} aria-label={name}>
            <Icon name={name} />
            {caret && <Caret />}
          </button>
        ))}
      </div>
      <div className="absolute top-[18px] right-0 flex w-[17px] flex-col border-t border-l border-[#999]">
        {["home", "books", "folder", "palette", "ball", "list"].map((n, i) => (
          <button
            key={n}
            className={clsx("flex h-4 items-center justify-center border-b border-[#999]", i === 0 ? "bg-white" : "bg-[#d6d6d6]")}
            aria-label={n}
          >
            <Icon name={n} />
          </button>
        ))}
      </div>
    </main>
  );
}

function BottomBars() {
  const views = ["front", "back", "left", "right", "top", "bottom", "iso", "trimetric", "dimetric"];
  return (
    <footer className="shrink-0 bg-[#f7f7f7]">
      <div role="tablist" className="flex h-[11px] border-t border-[#999]">
        <div className="flex w-[45px] bg-[#b9b9b9]">
          {["M1 1v5M6 1v5L2 3.500z", "M5 1v5L2 3.500z", "M2 1v5l3-2.500z", "M6 1v5M1 1v5l4-2.500z"].map((d) => (
            <button key={d} className="flex flex-1 items-center justify-center border-r border-[#aaa]" aria-label="Scroll">
              <svg viewBox="0 0 7 7" className="size-[7px]">
                <path d={d} fill="#999" stroke="#999" strokeWidth=".5" />
              </svg>
            </button>
          ))}
        </div>
        <button role="tab" aria-selected className="w-[38px] font-bold leading-[9px]">Model</button>
        <button role="tab" className="w-[45px] border-x border-b border-[#999] bg-[#d2d2d2] leading-[9px]">3D Views</button>
        <button role="tab" className="w-[71px] border-r border-b border-[#999] bg-[#d2d2d2] leading-[9px]">Motion Study 1</button>
      </div>
      <div className="flex h-[22px] items-center border-b border-[#999]">
        <div className="ml-[3px] h-4 border-l border-dotted border-[#888]" />
        <button className="w-[25px] pl-2" aria-label="Normal to">
          <Icon name="normal" />
        </button>
        <div className="h-4 w-px bg-[#bbb]" />
        <div className="flex pl-[2px]">
          {views.map((v) => (
            <button key={v} className="flex w-[18px] justify-center" aria-label={v}>
              <Icon name={v} />
            </button>
          ))}
        </div>
        <div className="ml-[2px] h-4 w-px bg-[#999]" />
        <button className="flex w-[25px] items-center justify-center" aria-label="Sketch tools">
          <Icon name="pencil" />
        </button>
        <div className="h-full w-px bg-[#ccc]" />
      </div>
      <div className="flex h-3 items-center border-b border-[#b5b5b5]">
        <span className="flex-1 pl-[1px]">bason</span>
        <span className="w-[62px]">Under Defined</span>
        <span className="w-[120px]">Editing Part</span>
        <span className="w-[36px]">MMGS</span>
        <Caret className="mr-[18px] rotate-180" />
        <svg viewBox="0 0 12 10" className="mr-[2px] h-[9px] w-[11px]" fill="#ddd" stroke="#444" strokeWidth=".800" aria-hidden="true">
          <path d="M1 4l5-3 5 3v3L6 9 1 6zM1 4l5 3 5-3M3 3l5 3" />
        </svg>
      </div>
    </footer>
  );
}

function Chrome({ badge, color }: { badge: string; color: string }) {
  return (
    <>
      <svg viewBox="0 0 18 18" className="size-[18px]">
        <circle cx="9" cy="9" r="8" fill="#f6c42c" />
        <path d="M9 9L2 5A8 8 0 0 1 16 5H9z" fill="#e0402f" />
        <path d="M9 9L2 5a8 8 0 0 0 6 12l4-6z" fill="#2f9e50" />
        <circle cx="9" cy="9" r="4" fill="#fff" />
        <circle cx="9" cy="9" r="3" fill="#2f73e0" />
      </svg>
      <span className={clsx("absolute top-[1px] right-[1px] flex size-[11px] items-center justify-center rounded-full text-[7px] leading-[7px] text-white", color)}>
        {badge}
      </span>
    </>
  );
}

const apps: { name: string; running?: boolean; active?: boolean; art: ReactNode }[] = [
  { name: "Task view", art: <><path d="M6 1h11v11H6z" fill="#f2f2f2" /><path d="M2 5h4v7h8v4H2z" fill="#2b2b2b" /><path d="M6 5h8v7H6z" fill="#9c9c9c" /></> },
  { name: "Chat", art: <><path d="M9 1a8 8 0 1 1-5 14l-3 1V9a8 8 0 0 1 8-8z" fill="#6064bb" /><rect x="4" y="6" width="7" height="6" rx="1" fill="#fff" /><path d="M12 8l3-2v6l-3-2z" fill="#fff" /></> },
  { name: "File Explorer", art: <><path d="M1 3h6l2 2h8v11H1z" fill="#e5a51e" /><path d="M1 6h16v10H1z" fill="#fcd354" /><path d="M5 11h8l2 5H3z" fill="#2b7cc4" /></> },
  { name: "Edge", art: <><circle cx="9" cy="9" r="8" fill="#1d78c8" /><path d="M1 8C3-2 17-1 17 8c0 4-6 4-6 1 1-5-8-5-10-1z" fill="#3fc5b4" /><path d="M8 8c-3 3 1 8 6 7-4 3-10 1-10-4 0-2 2-3 4-3z" fill="#124f96" /><path d="M9 8c-2 3 2 6 7 4l1-3c-2 2-7 2-6-1z" fill="#dfeaf2" /></> },
  { name: "Chrome", running: true, art: null },
  { name: "WhatsApp", art: <><path d="M1 17l1-4A8 8 0 1 1 6 16z" fill="#fff" /><circle cx="9" cy="9" r="7" fill="#40bb51" /><path d="M6 5l2 2-1 1c1 2 2 3 3 3l1-1 2 2c-1 3-5 1-6 0S4 7 6 5z" fill="#fff" /></> },
  { name: "Facebook", art: <><circle cx="9" cy="9" r="8" fill="#1877f2" /><path d="M8 17v-6H6V8h2V6c0-2 1-3 4-3v3c-1 0-2 0-2 1v1h2l-1 3h-1v6z" fill="#fff" /></> },
  { name: "Store", art: <><path d="M6 5V2h6v3" fill="none" stroke="#2a8bc2" strokeWidth="1.500" /><rect x="1" y="4" width="16" height="13" rx="2" fill="#174a7c" /><path d="M5 7h3v3H5z" fill="#ee5130" /><path d="M9 7h3v3H9z" fill="#7dba2e" /><path d="M5 11h3v3H5z" fill="#2aa2e0" /><path d="M9 11h3v3H9z" fill="#f9b922" /></> },
  { name: "Calculator", art: <><rect x="3" y="1" width="12" height="16" rx="1" fill="#596673" /><path d="M4 2h10v4H4z" fill="#8bd0ea" /><path d="M5 8h2v2H5zM8 8h2v2H8zM11 8h2v2h-2zM5 11h2v2H5zM8 11h2v2H8zM5 14h2v2H5zM8 14h2v2H8z" fill="#fff" /><path d="M11 11h2v5h-2z" fill="#1c4c86" /></> },
  { name: "Outlook", art: <><path d="M4 6l6-4 7 4v10H4z" fill="#1a91d6" /><path d="M4 8l7 4 6-4v8H4z" fill="#54c1ec" /><rect x="1" y="4" width="9" height="9" rx="1" fill="#0f62ad" /><circle cx="5.500" cy="8.500" r="2.300" fill="none" stroke="#fff" strokeWidth="1.300" /><path d="M7 13h11v4H7z" fill="#0e9d98" /><text x="7.500" y="17" fontSize="4" fill="#fff" fontWeight="bold">NEW</text></> },
  { name: "Mail", art: <><path d="M1 7l8-6 8 6v9H1z" fill="#14568f" /><path d="M3 5h12v6H3z" fill="#e9f2f8" /><path d="M1 7l8 5 8-5v9H1z" fill="#2d9be1" /></> },
  { name: "uTorrent", running: true, art: <><circle cx="9" cy="9" r="8" fill="#6aa84a" /><path d="M6 4v6c0 3 5 3 5 0V4M11 10c0 2 1 3 4 2M6 9l-2 6" stroke="#fff" strokeWidth="2" fill="none" /></> },
  { name: "Chrome profile", running: true, art: null },
  { name: "SolidWorks", active: true, running: true, art: <><path d="M1 4l8-3 8 3v8l-8 3-8-3z" fill="#b3131b" /><path d="M1 4l8-3 8 3-8 3z" fill="#5a1014" /><text x="2" y="11" fontSize="8" fontWeight="bold" fill="#fff">SW</text><path d="M4 12h13v5H4z" fill="#222" /><text x="4" y="17" fontSize="6" fontWeight="bold" fill="#fff">2022</text></> },
  { name: "Camtasia", running: true, art: <><rect x="1" y="1" width="16" height="16" rx="1" fill="#459c10" /><path d="M13 5H7c-1 0-2 1-2 2v4c0 1 1 2 2 2h6" fill="none" stroke="#fff" strokeWidth="2" /></> },
  { name: "Camtasia Recorder", running: true, art: <><rect x="1" y="1" width="16" height="16" rx="1" fill="#ee5a4a" /><path d="M13 5H7c-1 0-2 1-2 2v4c0 1 1 2 2 2h6" fill="none" stroke="#fff" strokeWidth="2" /></> },
  { name: "Photos", running: true, art: <><rect x="1" y="1" width="16" height="16" rx="2" fill="#2b7fd4" /><path d="M1 15l8-9 8 9v1l-1 1H2z" fill="#1b4c9c" /><path d="M1 15l6-5 8 7H2z" fill="#b4dcf7" /><circle cx="13" cy="5" r="1.500" fill="#fff" /></> },
];

function Taskbar() {
  return (
    <div className="flex h-8 shrink-0 items-center bg-linear-to-r from-[#dde3e6] via-[#d5dfe8] via-40% to-[#dadedf]">
      <div className="flex h-full w-[302px] items-center gap-[6px] bg-linear-to-r from-[#dde3e6] via-[#efe0d1] via-75% to-[#e4e0db] pl-[14px]">
        <svg viewBox="0 0 14 14" className="size-[14px]">
          <defs>
            <linearGradient id="sun" x2="1" y2="1">
              <stop offset="0" stopColor="#fcb524" />
              <stop offset="1" stopColor="#f0750f" />
            </linearGradient>
          </defs>
          <circle cx="7" cy="7" r="6.500" fill="url(#sun)" />
        </svg>
        <div className="leading-[11px]">
          <div>80°F</div>
          <div className="text-[#666]">Sunny</div>
        </div>
      </div>
      <button className="w-[32px] pl-[6px]" aria-label="Start">
        <svg viewBox="0 0 17 17" className="size-4">
          <path d="M0 0h8v8H0zM9 0h8v8H9zM0 9h8v8H0zM9 9h8v8H9z" fill="#1683d4" />
        </svg>
      </button>
      <label className="flex h-5 w-[145px] items-center rounded-full bg-[#f4f7fa] px-[6px]">
        <svg viewBox="0 0 12 12" className="mr-[6px] size-[11px]" fill="none" stroke="#222" strokeWidth="1.300">
          <circle cx="5" cy="5" r="4" />
          <path d="M8 8l3 3" />
        </svg>
        <input className="w-0 flex-1 text-[9px] outline-none placeholder:text-[#666]" placeholder="Search" aria-label="Search" />
        <svg viewBox="0 0 30 18" className="h-[17px] w-7" aria-hidden="true">
          <path d="M1 14h27l-2 4H2z" fill="#dcd9b2" />
          <path d="M2 6l4-4 4 3h10c4 0 4 3 4 5l1 5h-1l-2-5-1 6h-1l-1-6h-7l-1 6h-1l-1-6-2-4-4 2z" fill="#9b5426" />
          <path d="M5 2l2-1 4 5-2-1zM24 6c3 1 3 5 2 8l-2-4zM10 14v3M20 14v3M12 13v3" fill="#4a2412" stroke="#4a2412" strokeWidth=".6" />
        </svg>
      </label>
      <div className="flex h-full w-[500px] items-center pl-[1px]">
        {apps.map((a) => (
          <button key={a.name} className="flex h-full flex-1 items-center justify-center" aria-label={a.name}>
            <span className={clsx("relative flex h-[26px] w-[26px] items-center justify-center rounded-sm", a.active && "bg-[#f1f4f7]")}>
              {a.name === "Chrome" && <Chrome badge="g" color="bg-[#e2502a]" />}
              {a.name === "Chrome profile" && <Chrome badge="g" color="bg-[#178a96]" />}
              {a.art && (
                <svg viewBox="0 0 18 18" className="size-[18px]">
                  {a.art}
                </svg>
              )}
              {a.running && (
                <span className={clsx("absolute bottom-0 h-[2px] rounded-full", a.active ? "w-[10px] bg-[#1a72c8]" : "w-1 bg-[#777]")} />
              )}
            </span>
          </button>
        ))}
      </div>
      <div className="ml-auto flex items-center pr-[13px]">
        <svg viewBox="0 0 8 8" className="mr-[14px] size-2" fill="none" stroke="#222">
          <path d="M1 5.500l3-3 3 3" strokeWidth="1.200" />
        </svg>
        <svg viewBox="0 0 10 12" className="mr-[11px] h-3 w-[10px]" fill="none" stroke="#3a6da8">
          <rect x="3.500" y="1" width="3" height="6" rx="1.500" />
          <path d="M1.500 5c0 5 7 5 7 0M5 9v2.500" />
        </svg>
        <svg viewBox="0 0 12 12" className="mr-1 size-3" fill="none" stroke="#444">
          <path d="M7 2H1v7h10V6M4 11h5M8 1h3v3H8zM9.500 4v2" />
        </svg>
        <svg viewBox="0 0 12 12" className="mr-[10px] size-3" fill="none" stroke="#444">
          <path d="M1 4.500h2l2.500-2v7L3 7.500H1zM8 4.500l3 3M11 4.500l-3 3" />
        </svg>
        <time className="mr-[5px] w-[44px] text-right leading-[10px]">
          5:03 AM
          <br />
          10/24/2023
        </time>
        <svg viewBox="0 0 12 12" className="size-[10px]">
          <path d="M2 9V5c0-4 6-4 6-1h3v5l1 1H0zM4 11h4" fill="#222" stroke="#222" />
          <path d="M6 3h4L7 7h3" stroke="#ddd" fill="none" />
        </svg>
      </div>
    </div>
  );
}

export default function App() {
  return (
    <div className="flex h-screen flex-col overflow-hidden bg-white font-[Lato,'Noto_Sans',sans-serif] text-[8px] leading-[11px] text-[#222]">
      <TitleBar />
      <Ribbon />
      <div className="relative flex shrink-0 items-start justify-between border-r border-[#777]">
        <RibbonTabs />
        <div className="absolute top-1 right-[6px] z-10 flex">
          {["M4 4v5L1.500 6.500z", "M7 4v5l2.500-2.500z"].map((d) => (
            <button key={d} className="w-[18px]" aria-label="Dock pane">
              <svg viewBox="0 0 12 12" className="size-3" fill="none" stroke="#aaa">
                <path d="M1.500 2.500h8v8h-8z" />
                <path d="M5.500 2.500v8" />
                <path d={d} fill="#999" stroke="none" />
              </svg>
            </button>
          ))}
          <WindowButtons color="#999" gap="w-[17px]" />
        </div>
      </div>
      <div className="flex min-h-0 flex-1">
        <FeatureTree />
        <Viewport />
      </div>
      <BottomBars />
      <Taskbar />
    </div>
  );
}
